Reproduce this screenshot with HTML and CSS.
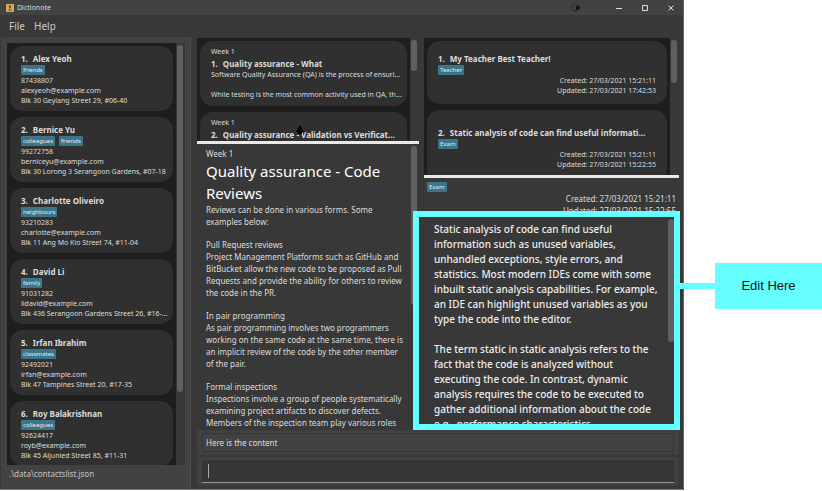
FILE: index.html
```html
<!DOCTYPE html>
<html lang="en">
<head>
<meta charset="utf-8">
<title>Dictionote</title>
<link rel="stylesheet" href="styles.css">
</head>
<body>
<div class="page">
  <div class="window">
    <header class="titlebar">
      <svg class="app-icon" viewBox="0 0 8 8" aria-hidden="true"><rect width="8" height="8" rx="1" fill="#d9a84e"/><path d="M4 1.5v3M2.5 6h3" stroke="#4a3515" fill="none"/><circle cx="4" cy="2.5" r="1" fill="#4a3515"/></svg>
      <span class="app-name">Dictionote</span>
      <svg class="share-icon" viewBox="0 0 8 8" aria-hidden="true"><path d="M5 6.5H1.5Q.5 6.5.5 5.5v-4Q.5.5 1.5.5h4q1 0 1 1" fill="none" stroke="#2b2b2b"/><path d="M4 2h3.6v3.6H4zM5.3 3.3v1h1v-1z" fill="#0c0c0c" fill-rule="evenodd"/><path d="M3 7.5h2" stroke="#2b2b2b"/></svg>
      <div class="window-buttons">
        <button type="button" aria-label="Minimize"><svg viewBox="0 0 8 8"><path d="M1 4.5h6"/></svg></button>
        <button type="button" aria-label="Maximize"><svg viewBox="0 0 8 8"><path d="M1.5 1.5h5v5h-5z"/></svg></button>
        <button type="button" aria-label="Close"><svg viewBox="0 0 8 8"><path d="M1.5 1.5l5 5M6.5 1.5l-5 5"/></svg></button>
      </div>
    </header>
    <nav class="menubar"><button type="button">File</button><button type="button">Help</button></nav>

    <div class="workspace">
      <aside class="contacts">
        <div class="contacts-view">
          <ul class="list">
            <li class="card contact"><h2 class="name"><span>1.</span>Alex Yeoh</h2><div class="tags"><span class="tag">friends</span></div><p>87438807</p><p>alexyeoh@example.com</p><p>Blk 30 Geylang Street 29, #06-40</p></li>
            <li class="card contact"><h2 class="name"><span>2.</span>Bernice Yu</h2><div class="tags"><span class="tag">colleagues</span><span class="tag">friends</span></div><p>99272758</p><p>berniceyu@example.com</p><p>Blk 30 Lorong 3 Serangoon Gardens, #07-18</p></li>
            <li class="card contact"><h2 class="name"><span>3.</span>Charlotte Oliveiro</h2><div class="tags"><span class="tag">neighbours</span></div><p>93210283</p><p>charlotte@example.com</p><p>Blk 11 Ang Mo Kio Street 74, #11-04</p></li>
            <li class="card contact"><h2 class="name"><span>4.</span>David Li</h2><div class="tags"><span class="tag">family</span></div><p>91031282</p><p>lidavid@example.com</p><p>Blk 436 Serangoon Gardens Street 26, #16-...</p></li>
            <li class="card contact"><h2 class="name"><span>5.</span>Irfan Ibrahim</h2><div class="tags"><span class="tag">classmates</span></div><p>92492021</p><p>irfan@example.com</p><p>Blk 47 Tampines Street 20, #17-35</p></li>
            <li class="card contact"><h2 class="name"><span>6.</span>Roy Balakrishnan</h2><div class="tags"><span class="tag">colleagues</span></div><p>92624417</p><p>royb@example.com</p><p>Blk 45 Aljunied Street 85, #11-31</p></li>
          </ul>
          <div class="track"><div class="thumb contacts-thumb"></div></div>
        </div>
        <footer class="path">.\data\contactslist.json</footer>
      </aside>

      <main class="main">
        <div class="columns">
          <section class="column">
            <div class="guide-view">
              <ul class="list">
                <li class="card guide"><p class="week">Week 1</p><h2 class="name"><span>1.</span>Quality assurance - What</h2><p>Software Quality Assurance (QA) is the process of ensuri...</p><p class="after-gap">While testing is the most common activity used in QA, th...</p></li>
                <li class="card guide"><p class="week">Week 1</p><h2 class="name"><span>2.</span>Quality assurance - Validation vs Verificat...</h2></li>
              </ul>
              <div class="track"><div class="thumb guide-thumb"></div></div>
              <svg class="cursor" viewBox="0 0 8 10" aria-hidden="true"><path d="M4 0L8 7H6v2H2V7H0z"/></svg>
            </div>
            <div class="divider"></div>
            <article class="reader">
              <div class="reader-text">
                <p class="reader-week">Week 1</p>
                <h1>Quality assurance - Code<br>Reviews</h1>
                <p>Reviews can be done in various forms. Some<br>examples below:</p>
                <p>Pull Request reviews<br>Project Management Platforms such as GitHub and<br>BitBucket allow the new code to be proposed as Pull<br>Requests and provide the ability for others to review<br>the code in the PR.</p>
                <p>In pair programming<br>As pair programming involves two programmers<br>working on the same code at the same time, there is<br>an implicit review of the code by the other member<br>of the pair.</p>
                <p>Formal inspections<br>Inspections involve a group of people systematically<br>examining project artifacts to discover defects.<br>Members of the inspection team play various roles</p>
              </div>
              <div class="track plain"><div class="thumb reader-thumb"></div></div>
            </article>
          </section>

          <section class="column">
            <div class="notes-view">
              <ul class="list">
                <li class="card note"><h2 class="name"><span>1.</span>My Teacher Best Teacher!</h2><div class="tags"><span class="tag">Teacher</span></div><p class="stamp">Created: 27/03/2021 15:21:11</p><p class="stamp">Updated: 27/03/2021 17:42:53</p></li>
                <li class="card note second"><h2 class="name"><span>2.</span>Static analysis of code can find useful informati...</h2><div class="tags"><span class="tag">Exam</span></div><p class="stamp">Created: 27/03/2021 15:21:11</p><p class="stamp">Updated: 27/03/2021 15:22:55</p></li>
              </ul>
              <div class="track"><div class="thumb notes-thumb"></div></div>
            </div>
            <div class="divider"></div>
            <div class="note-head">
              <div class="tags"><span class="tag">Exam</span></div>
              <p>Created: 27/03/2021 15:21:11</p>
              <p>Updated: 27/03/2021 15:22:55</p>
            </div>
            <div class="editor">
              <textarea id="note" aria-label="Note content" spellcheck="false">
Static analysis of code can find useful
information such as unused variables,
unhandled exceptions, style errors, and
statistics. Most modern IDEs come with some
inbuilt static analysis capabilities. For example,
an IDE can highlight unused variables as you
type the code into the editor.

The term static in static analysis refers to the
fact that the code is analyzed without
executing the code. In contrast, dynamic
analysis requires the code to be executed to
gather additional information about the code
e.g., performance characteristics.</textarea>
              <div class="track plain editor-track"><div class="thumb editor-thumb"></div></div>
            </div>
          </section>
        </div>
        <div class="panel result"><output>Here is the content</output></div>
        <div class="panel command"><div class="field"><span class="caret"></span><input type="text" aria-label="Command"></div></div>
      </main>
    </div>
  </div>
  <div class="callout"><div class="connector"></div><label for="note">Edit Here</label></div>
</div>
</body>
</html>
```
FILE: styles.css
```css
* { box-sizing: border-box; }
body { margin: 0; background: #fff; color: #ddd; font: 7px/10px "Noto Sans", "Open Sans", sans-serif; }
p, h1, h2, ul { margin: 0; padding: 0; }
ul { list-style: none; }
button { border: 0; padding: 0; background: none; color: inherit; font: inherit; }

.page { display: grid; grid-template-columns: 684fr 138fr; height: 100vh; padding-bottom: 1px; }
.window { display: flex; flex-direction: column; min-width: 0; min-height: 0; background: #383838; border-right: 1px solid #626262; border-bottom: 1px solid #777; }

.titlebar { display: flex; align-items: center; height: 15px; flex: none; padding: 0 7px 0 6px; background: #424242; }
.app-icon { width: 8px; height: 8px; margin-right: 3px; }
.share-icon { width: 8px; height: 8px; margin-left: auto; margin-right: 34px; }
.window-buttons { display: flex; gap: 16px; }
.window-buttons button { display: flex; width: 10px; height: 10px; }
.window-buttons svg { width: 8px; height: 8px; margin: auto; fill: none; stroke: #ddd; }

.menubar { display: flex; gap: 9px; align-items: center; height: 22px; flex: none; padding: 0 9px; font-size: 10px; color: #c8c8c8; }

.workspace { display: grid; grid-template-columns: 191fr 492fr; flex: 1; min-height: 0; }
.contacts { display: flex; flex-direction: column; min-height: 0; min-width: 0; padding: 6px 5px 0 6px; background: #424242; border-left: 1px solid #383838; border-right: 1px solid #505050; }
.contacts-view { display: flex; flex: 1; min-height: 0; overflow: hidden; background: #1e1e1e; }
.path { height: 24px; flex: none; padding: 4px 2px; font-size: 8px; color: #c4c4c4; }

.list { display: flex; flex-direction: column; gap: 6px; flex: 1; min-width: 0; padding: 3px; background: #1e1e1e; overflow: hidden; }
.card { flex: none; height: 65px; padding: 7px 11px; border-radius: 13px; background: #303030; white-space: nowrap; overflow: hidden; }
.name { font-size: 8px; line-height: 11px; font-weight: 700; }
.name span { margin-right: 5px; }
.tags { display: flex; gap: 4px; height: 11px; margin-bottom: 1px; align-items: center; }
.tag { height: 10px; padding: 0 2px; border-radius: 1px; background: #3a758c; color: #e4eef2; font-size: 6px; line-height: 10px; }

.track { width: 9px; flex: none; padding: 2px 1px; background: #383838; }
.thumb { width: 6px; border-radius: 3px; background: #606060; }
.contacts-thumb { height: 83%; }
.guide-thumb { height: 31px; }
.reader-thumb { height: 159px; }
.notes-thumb { height: 43px; }
.editor-thumb { height: 123px; }

.main { display: flex; flex-direction: column; min-width: 0; min-height: 0; padding: 0 4px 3px 6px; }
.columns { display: grid; grid-template-columns: 222fr 255fr; gap: 5px; flex: 1; min-height: 0; }
.column { display: flex; flex-direction: column; min-width: 0; min-height: 0; }
.guide-view { position: relative; display: flex; height: 104px; padding-top: 1px; flex: none; overflow: hidden; }
.guide { padding-top: 6px; }
.guide .name { margin: 1px 0; }
.after-gap { margin-top: 10px; }
.cursor { position: absolute; left: 99px; top: 88px; width: 8px; height: 10px; fill: #000; }
.divider { height: 3px; flex: none; background: #ece8ea; }

.reader { display: flex; flex: 1; min-height: 0; overflow: hidden; }
.reader-text { flex: 1; min-width: 0; padding: 4px 0 0 9px; font-size: 8px; line-height: 12px; white-space: nowrap; }
.reader-text p + p { margin-top: 11px; }
h1 { font-size: 15px; line-height: 22px; font-weight: 400; color: #fff; }

.notes-view { display: flex; height: 138px; padding-top: 1px; flex: none; overflow: hidden; }
.note { height: 63px; padding-top: 12px; }
.note.second { height: 74px; padding-top: 17px; }
.stamp { text-align: right; }
.note-head { height: 33px; flex: none; padding: 4px 3px 0; font-size: 8px; line-height: 12px; }
.note-head .tags { height: 10px; }
.note-head p { text-align: right; }
.editor { position: relative; display: flex; flex: 1; min-height: 0; margin: 0 -1px 0 -11px; border: 6px solid #66ffff; background: #383838; }
textarea { flex: 1; min-width: 0; padding: 5px 0 0 15px; border: 0; outline: 0; resize: none; overflow: hidden; background: none; color: #eee; font: 500 10px/15px "Noto Sans", sans-serif; white-space: pre; }
.plain { background: none; }
.editor-track { width: 7px; }

.panel { flex: none; background: #424242; border: 1px solid #3e3e3e; }
.result { padding: 2px 4px; }
.result output { display: block; height: 19px; padding: 0 3px; border: 1px solid #343434; font-size: 8px; line-height: 17px; }
.command { margin-top: 2px; padding: 2px 4px; }
.field { display: flex; align-items: center; height: 23px; padding-left: 6px; background: #363636; border-bottom: 1px solid #999; }
.caret { width: 1px; height: 14px; background: #aaa; }
.field input { flex: 1; min-width: 0; height: 18px; border: 0; outline: 0; background: none; color: #ddd; font: inherit; }

.callout { display: flex; align-items: center; padding-top: 81px; margin-left: -4px; z-index: 1; }
.connector { flex: 0 0 35px; height: 6px; background: #66ffff; }
.callout label { flex: 1; height: 46px; background: #66ffff; color: #111; text-align: center; font: 13px/46px "Liberation Sans", Arial, sans-serif; }
```
